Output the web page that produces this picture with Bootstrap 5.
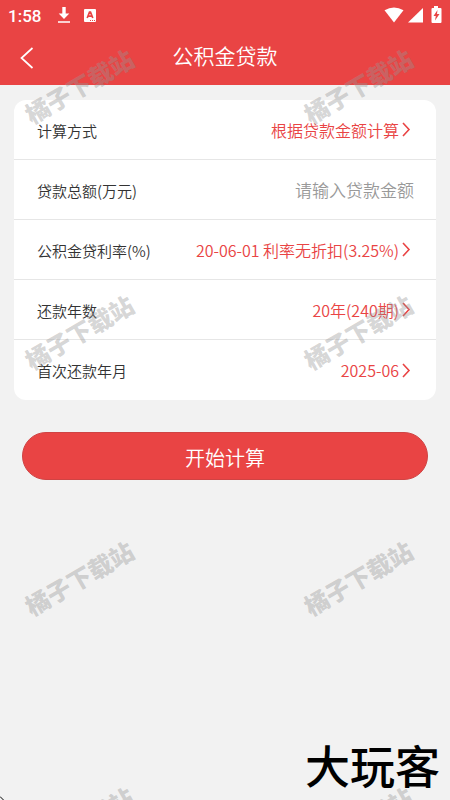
<!DOCTYPE html>
<html lang="zh-CN">
<head>
<meta charset="utf-8">
<meta name="viewport" content="width=device-width, initial-scale=1">
<title>公积金贷款</title>
<link href="https://cdn.jsdelivr.net/npm/bootstrap@5.3.0/dist/css/bootstrap.min.css" rel="stylesheet">
<style>
:root { --brand: #e94444; }
body { background: #f2f2f2; color: #333; font-family: "Noto Sans CJK SC", sans-serif; font-weight: 350; }
.app-top { background: var(--brand); }
.status-row { height: 30px; padding: 0 8px; font: 500 17px/30px Roboto, sans-serif; }
.status-row .clock { margin-right: 16px; padding-top: 2px; }
.status-row .status-app { margin-left: 13px; }
.title-row { height: 55px; }
.title-row h1 { font-size: 21px; line-height: 51px; font-weight: 350; }
.back-link { width: 54px; height: 55px; }
.loan-card { margin: 15px 14px 32px; border-radius: 12px; }
.loan-row { height: 60px; padding: 0 22px 0 23px; border-bottom: 1px solid #e6e6e6; }
.loan-row:last-child { border-bottom: 0; }
.loan-row label { font-size: 15px; line-height: 24px; padding-top: 2px; }
.pick { color: var(--brand); font-size: 16px; line-height: 24px; font-weight: 350; gap: 2px; padding-right: 3px; }
.amount { color: #333; font-size: 17px; line-height: 24px; font-weight: 350; outline: 0; min-width: 0; }
.amount::placeholder { color: #999; opacity: 1; }
.start-btn { margin: 0 22px; height: 48px; border-radius: 24px; background: var(--brand); border: 1px solid #cf4444; font-size: 20px; line-height: 24px; font-weight: 350; padding: 8px 12px 4px; }
.stamps { pointer-events: none; }
.stamp { position: absolute; color: rgba(150, 150, 150, .4); font-size: 24px; line-height: 36px; font-weight: 900; transform: translate(-50%, -50%) rotate(-30deg); white-space: nowrap; }
.stamp-a { left: 79px; }
.stamp-b { left: 358px; }
.stamp-1 { top: 86px; }
.stamp-2 { top: 332px; }
.stamp-3 { top: 578px; }
.stamp-4 { top: 824px; }
.brand-mark { position: absolute; right: 10px; bottom: 10px; font-size: 45px; line-height: 50px; font-weight: 500; color: #000; }
.corner-tick { position: absolute; left: 0; bottom: 0; }
</style>
</head>
<body>
<div class="position-relative min-vh-100 overflow-hidden d-flex flex-column">
  <header class="app-top text-white">
    <div class="status-row d-flex align-items-center">
      <span class="clock">1:58</span>
      <svg width="14" height="18" viewBox="0 0 14 18" fill="#fff" aria-hidden="true"><path d="M5.300 1h3.400v6.500h3.600L7 13 1.700 7.500h3.600zM1 15.300h12v1.500H1z"/></svg>
      <svg class="status-app" width="12" height="13" viewBox="0 0 12 13" aria-hidden="true"><rect width="12" height="13" rx="1" fill="#fff"/><path d="M3.200 9 5.500 3.200h1L8.800 9M4 7.200h4" fill="none" stroke="#e94444" stroke-width="1.700"/><path d="M6 11.500h1m1 0h1m1 0h1" stroke="#e94444"/></svg>
      <div class="ms-auto d-flex align-items-center">
        <svg width="20" height="18" viewBox="0 0 20 18" fill="#fff" aria-hidden="true"><path d="M.5 4.300Q10-1.500 19.500 4.300L10 16.500z"/></svg>
        <svg class="ms-1" width="15" height="18" viewBox="0 0 15 18" fill="#fff" aria-hidden="true"><path d="M15 2v14.500H0z"/></svg>
        <svg class="ms-2" width="11" height="18" viewBox="0 0 11 18" aria-hidden="true"><path d="M3 0h4v2h2.500q1 0 1 1v13q0 1-1 1h-8q-1 0-1-1V3q0-1 1-1H3z" fill="#fff"/><path d="M6.500 4 2.500 10h2.300L4 14.500 8.500 8H6z" fill="#e94444"/></svg>
      </div>
    </div>
    <div class="title-row d-flex">
      <a class="back-link d-flex align-items-center justify-content-center" href="#" aria-label="返回"><svg width="14" height="22" viewBox="0 0 14 22" fill="none" stroke="#fff" stroke-width="1.700" aria-hidden="true"><path d="M12.500 1 1.500 11l11 10"/></svg></a>
      <h1 class="flex-fill text-center mb-0">公积金贷款</h1>
      <span class="back-link"></span>
    </div>
  </header>

  <main>
    <form class="d-flex flex-column">
      <div class="loan-card bg-white">
        <div class="loan-row d-flex align-items-center justify-content-between">
          <label for="method">计算方式</label>
          <button id="method" type="button" class="pick btn border-0 py-0 ps-0 d-flex align-items-center">根据贷款金额计算<svg width="10" height="15" viewBox="0 0 10 15" fill="none" stroke="currentColor" stroke-width="1.600" aria-hidden="true"><path d="m2 1 6 6.500L2 14"/></svg></button>
        </div>
        <div class="loan-row d-flex align-items-center">
          <label class="text-nowrap" for="total">贷款总额(万元)</label>
          <input id="total" class="amount flex-fill border-0 bg-transparent p-0 text-end" type="text" inputmode="decimal" placeholder="请输入贷款金额">
        </div>
        <div class="loan-row d-flex align-items-center justify-content-between">
          <label for="rate">公积金贷利率(%)</label>
          <button id="rate" type="button" class="pick btn border-0 py-0 ps-0 d-flex align-items-center">20-06-01 利率无折扣(3.25%)<svg width="10" height="15" viewBox="0 0 10 15" fill="none" stroke="currentColor" stroke-width="1.600" aria-hidden="true"><path d="m2 1 6 6.500L2 14"/></svg></button>
        </div>
        <div class="loan-row d-flex align-items-center justify-content-between">
          <label for="years">还款年数</label>
          <button id="years" type="button" class="pick btn border-0 py-0 ps-0 d-flex align-items-center">20年(240期)<svg width="10" height="15" viewBox="0 0 10 15" fill="none" stroke="currentColor" stroke-width="1.600" aria-hidden="true"><path d="m2 1 6 6.500L2 14"/></svg></button>
        </div>
        <div class="loan-row d-flex align-items-center justify-content-between">
          <label for="first">首次还款年月</label>
          <button id="first" type="button" class="pick btn border-0 py-0 ps-0 d-flex align-items-center">2025-06<svg width="10" height="15" viewBox="0 0 10 15" fill="none" stroke="currentColor" stroke-width="1.600" aria-hidden="true"><path d="m2 1 6 6.500L2 14"/></svg></button>
        </div>
      </div>
      <button type="submit" class="start-btn btn text-white">开始计算</button>
    </form>
  </main>

  <div class="stamps position-absolute top-0 start-0 w-100 h-100">
    <span class="stamp stamp-a stamp-1">橘子下载站</span>
    <span class="stamp stamp-b stamp-1">橘子下载站</span>
    <span class="stamp stamp-a stamp-2">橘子下载站</span>
    <span class="stamp stamp-b stamp-2">橘子下载站</span>
    <span class="stamp stamp-a stamp-3">橘子下载站</span>
    <span class="stamp stamp-b stamp-3">橘子下载站</span>
    <span class="stamp stamp-a stamp-4">橘子下载站</span>
    <span class="stamp stamp-b stamp-4">橘子下载站</span>
    <span class="brand-mark">大玩客</span>
    <svg class="corner-tick" width="4" height="4" viewBox="0 0 4 4" aria-hidden="true"><path d="M0 .5 3.500 4" stroke="#000"/></svg>
  </div>
</div>
<script src="https://cdn.jsdelivr.net/npm/bootstrap@5.3.0/dist/js/bootstrap.bundle.min.js"></script>
</body>
</html>
